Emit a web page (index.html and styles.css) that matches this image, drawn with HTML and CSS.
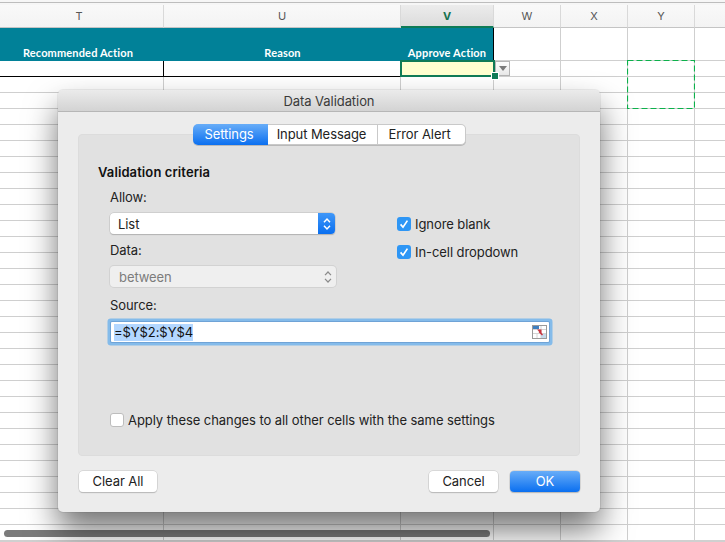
FILE: index.html
```html
<!DOCTYPE html>
<html lang="en">
<head>
    <meta charset="UTF-8">
    <meta name="viewport" content="width=device-width, initial-scale=1.0">
    <title>Data Validation</title>
    <link rel="stylesheet" href="styles.css">
</head>
<body>
    <div class="sheet">
        <div class="top-strip"></div>

        <div class="row col-heads">
            <div class="col-head first">T</div>
            <div class="col-head">U</div>
            <div class="col-head active">V</div>
            <div class="col-head">W</div>
            <div class="col-head">X</div>
            <div class="col-head">Y</div>
            <div class="col-head last"></div>
        </div>

        <div class="row title-row">
            <div class="title-cell first">Recommended Action</div>
            <div class="title-cell">Reason</div>
            <div class="title-cell end">Approve Action</div>
            <div class="cell"></div>
            <div class="cell"></div>
            <div class="cell"></div>
            <div class="cell last"></div>
        </div>

        <div class="row data-row">
            <div class="data-cell"></div>
            <div class="data-cell"></div>
            <div class="data-cell selected"><span class="fill-handle"></span></div>
            <div class="cell"><span class="drop-btn"></span></div>
            <div class="cell"></div>
            <div class="cell"></div>
            <div class="cell last"></div>
        </div>

        <div class="row blank-rows">
            <div class="cell"></div>
            <div class="cell"></div>
            <div class="cell"></div>
            <div class="cell"></div>
            <div class="cell"></div>
            <div class="cell"></div>
            <div class="cell last"></div>
        </div>

        <svg class="copy-range" width="68" height="49" viewBox="0 0 68 49">
            <rect x="0.5" y="0.5" width="67" height="48" fill="none" stroke="#0cb14b" stroke-width="1.2" stroke-dasharray="6 3"/>
        </svg>
        <div class="scrollbar"></div>
    </div>

    <div class="dialog">
        <div class="dialog-title">Data Validation</div>
        <div class="dialog-body">
            <div class="tabs">
                <span class="tab on">Settings</span>
                <span class="tab">Input Message</span>
                <span class="tab">Error Alert</span>
            </div>

            <div class="panel">
                <div class="panel-heading">Validation criteria</div>

                <div class="criteria">
                    <div class="criteria-left">
                        <div class="field-label first">Allow:</div>
                        <div class="select">
                            <span>List</span>
                            <span class="stepper">
                                <svg width="8" height="14" viewBox="0 0 8 14"><path d="M1 5.2 4 2l3 3.2M1 8.8 4 12l3-3.2" fill="none" stroke="#fff" stroke-width="1.5"/></svg>
                            </span>
                        </div>
                        <div class="field-label">Data:</div>
                        <div class="select disabled">
                            <span>between</span>
                            <span class="stepper">
                                <svg width="8" height="14" viewBox="0 0 8 14"><path d="M1 5.2 4 2l3 3.2M1 8.8 4 12l3-3.2" fill="none" stroke="#8a8a8a" stroke-width="1.2"/></svg>
                            </span>
                        </div>
                    </div>
                    <div class="criteria-right">
                        <div class="check-row">
                            <span class="check on"><svg width="14" height="14" viewBox="0 0 14 14"><path d="M3.6 7.4 6 10.2 10.4 3.6" fill="none" stroke="#fff" stroke-width="1.7"/></svg></span>
                            <span>Ignore blank</span>
                        </div>
                        <div class="check-row">
                            <span class="check on"><svg width="14" height="14" viewBox="0 0 14 14"><path d="M3.6 7.4 6 10.2 10.4 3.6" fill="none" stroke="#fff" stroke-width="1.7"/></svg></span>
                            <span>In-cell dropdown</span>
                        </div>
                    </div>
                </div>

                <div class="field-label source-label">Source:</div>
                <div class="source-input">
                    <span class="source-text">=$Y$2:$Y$4</span>
                    <svg class="range-icon" width="15" height="14" viewBox="0 0 15 14">
                        <rect x="0.5" y="0.5" width="14" height="13" fill="#fff" stroke="#9a9a9a"/>
                        <path d="M1 4.5h13M1 8.500h13M5 9v4M9 1v12" stroke="#d4d4d4" fill="none"/>
                        <rect x="1" y="1" width="6" height="3" fill="#3f7fbf"/>
                        <rect x="9" y="9" width="5" height="4" fill="#c5d9ea"/>
                        <path d="M5 4.500h4.500v4.500z" fill="#c8333f"/>
                        <path d="M7 6.500l3.500 3.500" stroke="#c8333f" stroke-width="1.500"/>
                    </svg>
                </div>

                <div class="check-row apply-row">
                    <span class="check"></span>
                    <span>Apply these changes to all other cells with the same settings</span>
                </div>
            </div>

            <div class="dialog-buttons">
                <span class="btn clear-btn">Clear All</span>
                <span class="btn cancel-btn">Cancel</span>
                <span class="btn ok-btn">OK</span>
            </div>
        </div>
    </div>
</body>
</html>
```

FILE: styles.css
```css
* {
    box-sizing: border-box;
}
html, body {
    margin: 0;
    height: 100%;
    overflow: hidden;
    background: #fff;
}
body {
    position: relative;
    font-family: "Inter", "Liberation Sans", sans-serif;
    font-size: 13px;
    letter-spacing: -0.07px;
    color: #222;
}

/* spreadsheet behind the dialog */
.sheet {
    position: relative;
    height: 542px;
    overflow: hidden;
    border-bottom: 2px solid #d0d0d0;
}
.top-strip {
    height: 5px;
    background: #f6f6f6;
    border-top: 2px solid #f6f6f6;
    box-shadow: inset 0 1px 0 #bdbdbd;
}
.row {
    display: grid;
    grid-template-columns: 164px 237px 93px 67px 67px 67px 1fr;
}
.cell {
    position: relative;
    border-right: 1px solid #cfcfcf;
    border-bottom: 1px solid #cfcfcf;
}
.cell.last {
    border-right: none;
}

.col-heads {
    height: 23px;
}
.col-head {
    padding-top: 4px;
    text-align: center;
    font-size: 11px;
    line-height: 14px;
    color: #555;
    background: linear-gradient(#f9f9f9, #f3f3f3);
    border-right: 1px solid #d9d9d9;
    border-bottom: 1px solid #c4c4c4;
}
.col-head.first {
    padding-right: 5px;
}
.col-head.last {
    border-right: none;
}
.col-head.active {
    font-weight: 700;
    color: #17724f;
    background: linear-gradient(#ececec, #dcdcdc);
    border-bottom: 2px solid #0f7b56;
}

.title-row {
    height: 33px;
}
.title-cell {
    padding-top: 18px;
    text-align: center;
    font-family: "Lato", sans-serif;
    font-size: 11px;
    font-weight: 700;
    line-height: 14px;
    letter-spacing: 0.15px;
    color: #fff;
    background: #018198;
}
.title-cell.first {
    padding-right: 8px;
}
.title-cell.end {
    border-right: 1px solid #000;
}

.data-row {
    height: 16px;
}
.data-cell {
    position: relative;
    border-right: 1px solid #000;
    border-bottom: 1px solid #000;
}
.data-cell.selected {
    background: #ffffcf;
    border: none;
    margin: -1px -1px 0 -1px;
    outline: 2px solid #0f7b56;
    outline-offset: -2px;
    z-index: 2;
}
.fill-handle {
    position: absolute;
    right: -3px;
    bottom: -2px;
    width: 6px;
    height: 6px;
    background: #0f7b56;
    box-shadow: 0 0 0 1px #fff;
}
.drop-btn {
    position: absolute;
    left: 1px;
    top: 0;
    width: 15px;
    height: 15px;
    background: linear-gradient(#fdfdfd, #e9e9e9);
    border: 1px solid #b5b5b5;
}
.drop-btn::after {
    content: "";
    position: absolute;
    left: 3px;
    top: 4px;
    border-left: 4px solid transparent;
    border-right: 4px solid transparent;
    border-top: 5px solid #7b7b7b;
}

.blank-rows {
    height: 470px;
    background: repeating-linear-gradient(#fff 0, #fff 15px, #cfcfcf 15px, #cfcfcf 16px);
}
.blank-rows .cell {
    border-bottom: none;
}

.copy-range {
    position: absolute;
    left: 627px;
    top: 60px;
}
.scrollbar {
    position: absolute;
    left: 4px;
    top: 530px;
    width: 486px;
    height: 7px;
    border-radius: 4px;
    background: #7b7b7b;
}

/* dialog */
.dialog {
    position: absolute;
    left: 58px;
    top: 90px;
    width: 542px;
    height: 422px;
    border-radius: 5px;
    background: #ececec;
    box-shadow: 0 0 0 1px rgba(0,0,0,0.06), 0 18px 32px rgba(0,0,0,0.55);
    overflow: hidden;
}
.dialog-title {
    height: 22px;
    line-height: 23px;
    text-align: center;
    color: #3a3a3a;
    background: linear-gradient(#ebebeb, #d3d3d3);
    border-bottom: 1px solid #b6b6b6;
}
.dialog-body {
    padding: 12px 20px 0;
}
.tabs {
    position: relative;
    z-index: 1;
    display: grid;
    grid-template-columns: 75px 110px 88px;
    justify-content: center;
    height: 21px;
    margin-bottom: -11px;
    margin-left: 1px;
}
.tab {
    display: block;
    padding-right: 2px;
    line-height: 19px;
    text-align: center;
    background: #fff;
    border: 1px solid #c9c9c9;
    border-left: none;
    box-shadow: 0 1px 0 #b9b9b9;
}
.tab:last-child {
    padding-right: 4px;
    border-radius: 0 5px 5px 0;
}
.tab.on {
    padding-right: 3px;
    line-height: 21px;
    color: #fff;
    border: none;
    border-radius: 5px 0 0 5px;
    background: linear-gradient(#68adf8, #0a6ff0);
}
.panel {
    height: 322px;
    padding: 29px 32px 0;
    background: #e1e1e1;
    border: 1px solid #dcdcdc;
    border-radius: 4px;
}
.panel-heading {
    margin-left: -13px;
    line-height: 16px;
    font-weight: 600;
    letter-spacing: 0.1px;
    color: #111;
}
.criteria {
    display: flex;
}
.criteria-left {
    width: 226px;
    margin-left: -1px;
}
.criteria-right {
    margin-left: 61px;
    padding-top: 36px;
}
.field-label {
    margin-top: 8px;
    line-height: 16px;
}
.field-label.first {
    margin-top: 9px;
}
.field-label.source-label {
    margin-top: 10px;
    margin-left: -1px;
}
.select {
    display: flex;
    justify-content: space-between;
    align-items: center;
    height: 21px;
    margin-top: 8px;
    margin-right: 1px;
    padding-left: 8px;
    background: #fff;
    border-radius: 4px;
    box-shadow: 0 0 0 0.5px #bdbdbd, 0 1px 1px #a9a9a9;
}
.select .stepper {
    display: flex;
    align-items: center;
    justify-content: center;
    width: 17px;
    height: 21px;
    border-radius: 0 4px 4px 0;
    background: linear-gradient(#3f97f8, #0a6ff0);
}
.select.disabled {
    margin-right: 0;
    color: #7c7c7c;
    padding-left: 9px;
    background: #efefef;
    box-shadow: 0 0 0 1px #d2d2d2;
}
.select.disabled .stepper {
    background: none;
}
.check-row {
    display: flex;
    align-items: center;
    gap: 4px;
    height: 16px;
    margin-bottom: 12px;
}
.check {
    display: block;
    width: 14px;
    height: 14px;
    background: #fff;
    border: 1px solid #bdbdbd;
    border-radius: 3px;
}
.check.on {
    background: #2e96f5;
    border: none;
}
.check svg {
    display: block;
}
.source-input {
    position: relative;
    display: flex;
    align-items: center;
    justify-content: space-between;
    width: 438px;
    height: 20px;
    margin-top: 9px;
    margin-left: 0;
    padding: 0 2px 0 3px;
    background: #fff;
    box-shadow: 0 0 0 1px #6fa3d6, 0 0 0 3.500px #84bbea;
    border-radius: 1px;
}
.source-text {
    line-height: 17px;
    background: #b3d7ff;
    color: #111;
}
.range-icon {
    flex: none;
}
.apply-row {
    margin-top: 70px;
    margin-bottom: 0;
    margin-left: -1px;
}
.dialog-buttons {
    display: flex;
    margin-top: 15px;
    margin-left: 1px;
}
.btn {
    display: block;
    height: 21px;
    line-height: 20px;
    text-align: center;
    background: #fff;
    border-radius: 4px;
    box-shadow: 0 0 0 0.5px #c4c4c4, 0 1px 1px #b0b0b0;
}
.clear-btn {
    width: 78px;
}
.cancel-btn {
    width: 69px;
    margin-left: auto;
}
.ok-btn {
    width: 70px;
    margin-left: 12px;
    color: #fff;
    background: linear-gradient(#68adf8, #0a6ff0);
}
```
